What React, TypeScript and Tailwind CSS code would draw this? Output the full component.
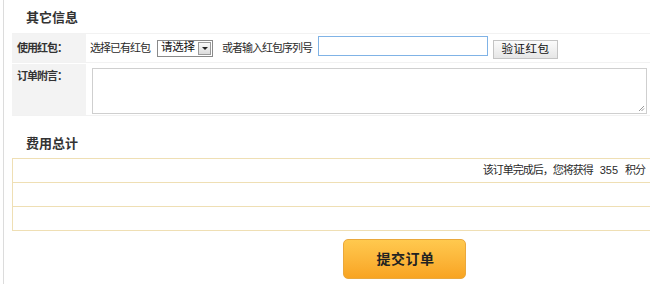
import * as React from "react";

const font = { fontFamily: '"Liberation Sans", "Noto Sans CJK SC", sans-serif' };

function SelectBox() {
  return (
    <div className="flex h-[17px] w-[56px] items-center border border-[#8a8a8a] bg-white">
      <span className="flex-1 pl-[3px] text-[11.5px] leading-none tracking-[-0.3px] text-[#111]">请选择</span>
      <span className="mr-[1px] flex h-[13px] w-[13px] items-center justify-center border border-[#9a9a9a] bg-gradient-to-b from-[#fafafa] to-[#dcdcdc]">
        <span className="h-0 w-0 border-x-[3px] border-t-[3px] border-x-transparent border-t-[#222]" />
      </span>
    </div>
  );
}

export default function App() {
  return (
    <div className="h-[284px] w-[650px] overflow-hidden bg-white pl-[3px] text-[11px] tracking-[-1px] text-[#2a2a2a]" style={font}>
      <div className="h-full border-l border-[#dcdcdc] pl-[8px]">
        <h3 className="flex h-[33px] items-center pl-[14px] pt-[3px] text-[13px] font-bold tracking-normal text-[#333]">其它信息</h3>

        <div className="flex flex-col">
          <div className="flex h-[30px] border-y border-[#f2f2f2]">
            <div className="flex w-[74px] items-center bg-[#f3f3f3] pl-[5px] font-bold text-[#333]">使用红包：</div>
            <div className="flex flex-1 items-center pl-[4px]">
              <span className="w-[67px]">选择已有红包</span>
              <SelectBox />
              <span className="ml-[9px] w-[96px]">或者输入红包序列号</span>
              <div className="mt-[-4px] h-[20px] w-[170px] border border-[#80b3e6] bg-white" />
              <button className="ml-[5px] mt-[2px] h-[19px] w-[65px] border border-[#c4c4c4] bg-gradient-to-b from-[#fbfbfb] to-[#e6e6e6] text-[11.5px] tracking-[0.5px] text-[#111]">
                验证红包
              </button>
            </div>
          </div>
          <div className="mt-[1px] flex h-[52px] border-b border-[#f2f2f2]">
            <div className="w-[74px] bg-[#f3f3f3] pl-[5px] pt-[4px] font-bold text-[#333]">订单附言：</div>
            <div className="flex-1 pl-[6px] pt-[4px]">
              <div className="relative h-[46px] w-[555px] border border-[#cfcfcf] bg-white">
                <svg className="absolute bottom-[1px] right-[1px]" width="7" height="7" viewBox="0 0 7 7">
                  <path d="M6 1L1 6M6 3.5L3.5 6" stroke="#999" strokeWidth="1" />
                </svg>
              </div>
            </div>
          </div>
        </div>

        <h3 className="flex h-[42px] items-center pl-[14px] pt-[13px] text-[13px] font-bold tracking-normal text-[#333]">费用总计</h3>

        <div className="w-[650px] border border-[#efdfb4]">
          <div className="flex h-[24px] items-center justify-end border-b border-[#efdfb4] pr-[16px]">
            该订单完成后，您将获得<span className="mx-[7px] tracking-normal">355</span>积分
          </div>
          <div className="h-[24px] border-b border-[#efdfb4]" />
          <div className="h-[23px]" />
        </div>

        <div className="pl-[331px] pt-[8px]">
          <button className="h-[40px] w-[123px] rounded-[5px] border border-[#eaa83c] bg-gradient-to-b from-[#ffc94e] to-[#f8a421] pl-[2px] text-[14px] font-bold tracking-[0.5px] text-[#222]">
            提交订单
          </button>
        </div>
      </div>
    </div>
  );
}
